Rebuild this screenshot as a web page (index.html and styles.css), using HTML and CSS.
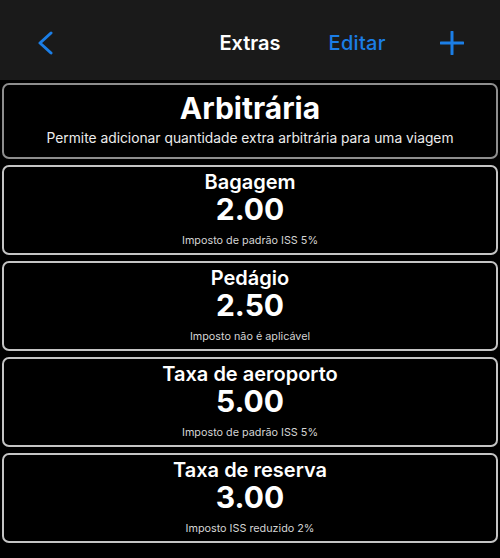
FILE: index.html
```html
<!DOCTYPE html>
<html lang="pt">
<head>
  <meta charset="UTF-8">
  <meta name="viewport" content="width=device-width, initial-scale=1.0">
  <title>Extras</title>
  <link rel="stylesheet" href="styles.css">
</head>
<body>
  <header class="navbar">
    <div class="nav-left">
      <svg class="nav-back" width="16" height="24" viewBox="0 0 16 24">
        <polyline points="13,2 2,12 13,22" fill="none" stroke="#1b7ee6" stroke-width="3" stroke-linecap="round" stroke-linejoin="round"/>
      </svg>
    </div>
    <div class="nav-title">Extras</div>
    <div class="nav-right">
      <span class="nav-edit">Editar</span>
      <svg class="nav-add" width="24" height="24" viewBox="0 0 24 24">
        <line x1="12" y1="1" x2="12" y2="23" stroke="#1b7ee6" stroke-width="3" stroke-linecap="round"/>
        <line x1="1" y1="12" x2="23" y2="12" stroke="#1b7ee6" stroke-width="3" stroke-linecap="round"/>
      </svg>
    </div>
  </header>

  <div class="extras-list">
    <div class="extra-card arbitrary">
      <div class="arb-title">Arbitrária</div>
      <div class="arb-desc">Permite adicionar quantidade extra arbitrária para uma viagem</div>
    </div>

    <div class="extra-card">
      <div class="extra-name">Bagagem</div>
      <div class="extra-value">2.00</div>
      <div class="extra-tax">Imposto de padrão ISS 5%</div>
    </div>

    <div class="extra-card">
      <div class="extra-name">Pedágio</div>
      <div class="extra-value">2.50</div>
      <div class="extra-tax">Imposto não é aplicável</div>
    </div>

    <div class="extra-card">
      <div class="extra-name">Taxa de aeroporto</div>
      <div class="extra-value">5.00</div>
      <div class="extra-tax">Imposto de padrão ISS 5%</div>
    </div>

    <div class="extra-card">
      <div class="extra-name">Taxa de reserva</div>
      <div class="extra-value">3.00</div>
      <div class="extra-tax">Imposto ISS reduzido 2%</div>
    </div>
  </div>
</body>
</html>
```

FILE: styles.css
```css
body {
  margin: 0;
  padding: 0;
  background-color: #000;
  color: #fff;
  font-family: Inter, "Noto Sans", sans-serif;
}

/* top navigation bar */
.navbar {
  height: 80px;
  background-color: #1a1a1a;
  display: grid;
  grid-template-columns: 1fr auto 1fr;
  align-items: center;
  padding-top: 6px;
  box-sizing: border-box;
}
.nav-left {
  padding-left: 38px;
  display: flex;
}
.nav-title {
  font-size: 20px;
  font-weight: 600;
}
.nav-right {
  display: flex;
  align-items: center;
  justify-content: space-between;
  padding-left: 48px;
  padding-right: 36px;
}
.nav-edit {
  color: #1b7ee6;
  font-size: 20px;
  font-weight: 500;
  letter-spacing: 0.3px;
}
.nav-back, .nav-add {
  display: block;
}

/* cards */
.extras-list {
  display: flex;
  flex-direction: column;
  gap: 6px;
  padding: 3px 2px;
}
.extra-card {
  border: 2px solid #c4c4c4;
  border-radius: 7px;
  text-align: center;
  padding: 4px 0 5px;
}
.extra-card.arbitrary {
  border-color: #8e8e8e;
  padding: 5px 0 10px;
}
.arb-title {
  font-size: 30px;
  font-weight: 700;
  line-height: 36px;
}
.arb-desc {
  font-size: 13.8px;
  line-height: 18px;
  margin-top: 3px;
  color: #ececec;
}
.extra-name {
  font-size: 20px;
  font-weight: 600;
  line-height: 22px;
}
.extra-value {
  font-size: 30px;
  font-weight: 700;
  line-height: 30px;
  margin-top: 1px;
}
.extra-tax {
  font-size: 10.8px;
  line-height: 14px;
  margin-top: 10px;
  color: #d4d4d4;
}
```
